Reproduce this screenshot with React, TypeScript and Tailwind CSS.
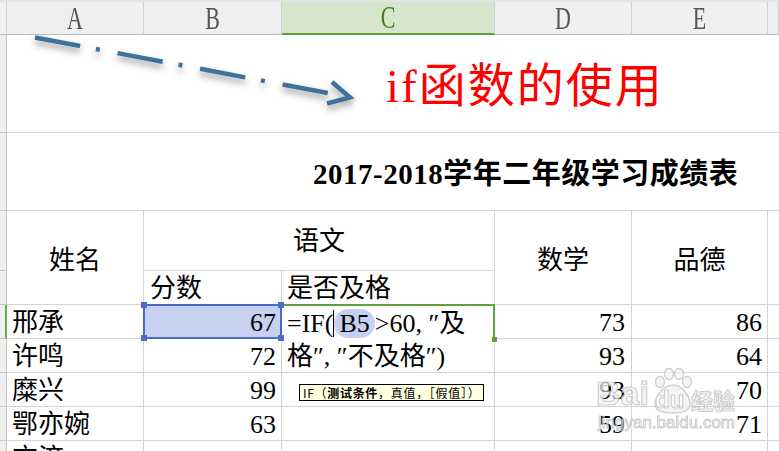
import React from "react";

const cell = "border-r border-b border-[#d4d4d4]";
const rowHead = "bg-[#f0f0f0] border-r border-b border-[#c8c8c8]";
const colHead =
  "bg-[#efefef] border-r border-[#d0d0d0] border-b border-b-[#bcbcbc] flex items-center justify-center text-[#555] text-[22px]";

function Arrow() {
  return (
    <svg
      className="absolute left-0 top-0 overflow-visible pointer-events-none"
      width="360"
      height="80"
      viewBox="0 0 360 80"
    >
      <defs>
        <filter id="sh" x="-20%" y="-50%" width="140%" height="250%">
          <feDropShadow dx="0" dy="4" stdDeviation="3.5" floodColor="#000" floodOpacity="0.4" />
        </filter>
      </defs>
      <g filter="url(#sh)" stroke="#41709c" strokeWidth="4.5" fill="none">
        <line x1="28" y1="2.5" x2="326" y2="59" strokeDasharray="46 16 4 18" />
        <polyline points="325,47 343,62.5 320,68.5" strokeLinejoin="miter" />
      </g>
    </svg>
  );
}

function Watermark() {
  return (
    <div className="absolute left-[596px] top-[364px] w-[150px] h-[70px] pointer-events-none opacity-75">
      <span className="absolute left-0 top-[10px] font-['Liberation_Sans',sans-serif] font-bold text-[34px] leading-none text-[#f2f2f2] [-webkit-text-stroke:1.2px_#bfbfbf]">
        Bai
      </span>
      <svg className="absolute left-[56px] top-[2px]" width="42" height="46" viewBox="0 0 42 46">
        <g fill="#f2f2f2" stroke="#bfbfbf" strokeWidth="1.4">
          <ellipse cx="8" cy="14" rx="4.5" ry="5.5" />
          <ellipse cx="17" cy="6" rx="4.5" ry="5.5" />
          <ellipse cx="27" cy="6" rx="4.5" ry="5.5" />
          <ellipse cx="35" cy="14" rx="4.5" ry="5.5" />
          <path d="M21 17 C30 17 38 28 38 36 C38 43 31 45 21 45 C11 45 3 43 3 36 C3 28 12 17 21 17 Z" />
        </g>
      </svg>
      <span className="absolute left-[59px] top-[22px] font-['Liberation_Sans',sans-serif] font-bold text-[24px] leading-none text-[#ffffff] [-webkit-text-stroke:1.2px_#bfbfbf]">
        du
      </span>
      <span className="absolute left-[95px] top-[22px] font-['Noto_Sans_CJK_SC',sans-serif] font-bold text-[22px] leading-none text-[#f2f2f2] [-webkit-text-stroke:1.2px_#bfbfbf]">
        经验
      </span>
      <span className="absolute left-[2px] top-[48px] font-['Liberation_Sans',sans-serif] text-[17px] leading-none text-[#f2f2f2] [-webkit-text-stroke:0.9px_#b8b8b8]">
        jingyan.baidu.com
      </span>
    </div>
  );
}

const rows = [
  { name: "邢承", b: "67", d: "73", e: "86" },
  { name: "许鸣", b: "72", d: "93", e: "64" },
  { name: "糜兴", b: "99", d: "93", e: "70" },
  { name: "鄂亦婉", b: "63", d: "59", e: "71" },
  { name: "方济", b: "", d: "", e: "" },
];

const rowStart = ["row-start-6", "row-start-7", "row-start-8", "row-start-9", "row-start-10"];

export default function App() {
  return (
    <div className="relative w-[779px] h-[451px] overflow-hidden bg-white border-t-2 border-[#e4e4e4] font-['Liberation_Serif','Noto_Sans_CJK_SC',serif] text-black">
      <div className="grid grid-cols-[7px_137px_138px_213px_137px_136px_1fr] grid-rows-[33px_98px_78px_60px_34px_34px_34px_34px_34px_34px]">
        {/* header row */}
        <div className="col-start-1 row-start-1 bg-[#efefef] border-r border-[#d0d0d0] border-b border-b-[#bcbcbc]" />
        <div className={`col-start-2 row-start-1 ${colHead}`}>
          <span className="inline-block scale-y-[1.4]">A</span>
        </div>
        <div className={`col-start-3 row-start-1 ${colHead}`}>
          <span className="inline-block scale-y-[1.4]">B</span>
        </div>
        <div className="col-start-4 row-start-1 bg-[#d6e6cd] border-r border-[#d0d0d0] border-b-2 border-b-[#5fa13a] flex items-center justify-center text-[#3f7f1f] text-[22px]">
          <span className="inline-block scale-y-[1.4]">C</span>
        </div>
        <div className={`col-start-5 row-start-1 ${colHead}`}>
          <span className="inline-block scale-y-[1.4]">D</span>
        </div>
        <div className={`col-start-6 row-start-1 ${colHead}`}>
          <span className="inline-block scale-y-[1.4]">E</span>
        </div>
        <div className={`col-start-7 row-start-1 ${colHead}`} />

        {/* row 1 */}
        <div className={`col-start-1 row-start-2 ${rowHead}`} />
        <div className="col-start-2 col-span-6 row-start-2 border-b border-[#d4d4d4] relative flex items-center pl-[379px] pt-[6px]">
          <Arrow />
          <span className="text-[#ff0000] text-[47px] leading-none tracking-[2px]">if函数的使用</span>
        </div>

        {/* row 2 */}
        <div className={`col-start-1 row-start-3 ${rowHead}`} />
        <div className="col-start-2 col-span-6 row-start-3 border-b border-[#d4d4d4] flex items-center pl-[306px] pt-[5px]">
          <span className="font-bold text-[29px] leading-none tracking-[0.5px]">2017-2018学年二年级学习成绩表</span>
        </div>

        {/* row 3 & 4 */}
        <div className={`col-start-1 row-start-4 ${rowHead}`} />
        <div className={`col-start-1 row-start-5 ${rowHead}`} />
        <div className={`col-start-2 row-start-4 row-span-2 ${cell} flex items-center justify-center pt-[6px] text-[26px]`}>
          姓名
        </div>
        <div className={`col-start-3 col-span-2 row-start-4 ${cell} flex items-center justify-center pt-[2px] text-[26px]`}>
          语文
        </div>
        <div className={`col-start-5 row-start-4 row-span-2 ${cell} flex items-center justify-center pt-[6px] text-[26px]`}>
          数学
        </div>
        <div className={`col-start-6 row-start-4 row-span-2 ${cell} flex items-center justify-center pt-[6px] text-[26px]`}>
          品德
        </div>
        <div className="col-start-7 row-start-4 row-span-2 border-b border-[#d4d4d4]" />
        <div className={`col-start-3 row-start-5 ${cell} flex items-end pl-[6px] text-[26px] leading-[31px]`}>分数</div>
        <div className={`col-start-4 row-start-5 ${cell} flex items-end pl-[5px] text-[26px] leading-[31px]`}>是否及格</div>

        {/* data rows */}
        {rows.map((r, i) => (
          <React.Fragment key={i}>
            <div
              className={`col-start-1 ${rowStart[i]} ${rowHead} ${
                i === 0 ? "border-r-2 border-r-[#6aaa48]" : ""
              }`}
            />
            <div className={`col-start-2 ${rowStart[i]} ${cell} flex items-end pl-[5px] text-[26px] leading-[31px]`}>
              {r.name}
            </div>
            <div
              className={`col-start-3 ${rowStart[i]} ${cell} relative flex items-end justify-end pr-[5px] text-[26px] leading-[31px] ${
                i === 0 ? "bg-[#c6d0f0]" : ""
              }`}
            >
              {r.b}
              {i === 0 && (
                <div className="absolute left-[-1px] top-[-1px] right-[-1px] bottom-[-1px] border-2 border-[#4a6cc8] z-20">
                  <div className="absolute left-[-4px] top-[-4px] w-[6px] h-[6px] bg-[#4a6cc8]" />
                  <div className="absolute right-[-4px] top-[-4px] w-[6px] h-[6px] bg-[#4a6cc8]" />
                  <div className="absolute left-[-4px] bottom-[-4px] w-[6px] h-[6px] bg-[#4a6cc8]" />
                  <div className="absolute right-[-4px] bottom-[-4px] w-[6px] h-[6px] bg-[#4a6cc8]" />
                </div>
              )}
            </div>
            <div className={`col-start-4 ${rowStart[i]} ${cell} relative`}>
              {i === 0 && (
                <>
                  <div className="absolute left-0 top-0 w-[212px] h-[67px] bg-white z-10 pl-[5px] pt-[2px] text-[26px] leading-[33px] whitespace-nowrap">
                    <div>
                      =IF(
                      <span className="inline-block w-px h-[27px] bg-black align-[-5px]" />
                      <span className="rounded-full bg-[#c6d0f0] px-[5px]">B5</span>
                      {">60, ″及"}
                    </div>
                    <div>格″, ″不及格″)</div>
                  </div>
                  <div className="absolute left-[-1px] top-[-1px] w-[214px] h-[35px] border-t-2 border-r-2 border-[#5fa13a] z-10">
                    <div className="absolute right-[-4px] bottom-[-3px] w-[5px] h-[5px] bg-[#5fa13a]" />
                  </div>
                </>
              )}
              {i === 2 && (
                <div className="absolute left-[17px] top-[11px] z-20 h-[17px] border border-black bg-[#ffffe1] px-[3px] flex items-center text-[12px] leading-none whitespace-nowrap tracking-[0.7px] font-['Noto_Sans_CJK_SC',sans-serif]">
                  IF（<b>测试条件</b>，真值，［假值］）
                </div>
              )}
            </div>
            <div className={`col-start-5 ${rowStart[i]} ${cell} flex items-end justify-end pr-[6px] text-[26px] leading-[31px]`}>
              {r.d}
            </div>
            <div className={`col-start-6 ${rowStart[i]} ${cell} flex items-end justify-end pr-[5px] text-[26px] leading-[31px]`}>
              {r.e}
            </div>
            <div className={`col-start-7 ${rowStart[i]} border-b border-[#d4d4d4]`} />
          </React.Fragment>
        ))}
      </div>
      <Watermark />
    </div>
  );
}
